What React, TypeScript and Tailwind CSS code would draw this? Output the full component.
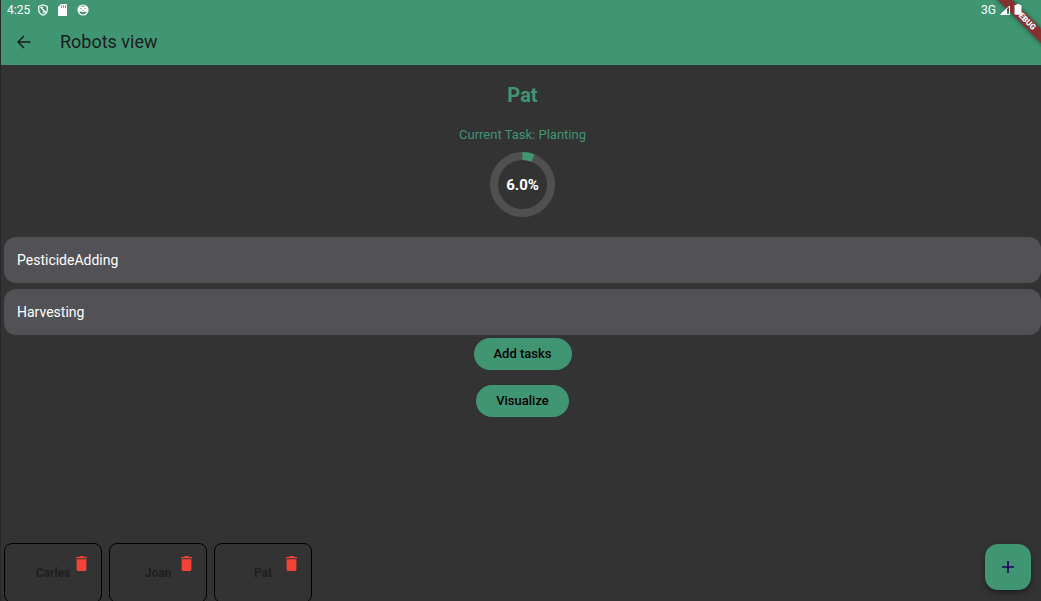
import React from "react";

const queuedTasks = ["PesticideAdding", "Harvesting"];
const robots = ["Carles", "Joan", "Pat"];

function StatusBar() {
  return (
    <div className="flex h-5 items-center justify-between pl-1.5 pr-[19px] text-white">
      <div className="flex items-center gap-2">
        <span className="text-xs leading-5">4:25</span>
        <svg className="h-3 w-2.5" viewBox="0 0 10 12" fill="none" stroke="currentColor" strokeWidth="1.2" aria-hidden="true">
          <path d="M5 .8 9.300 2.400V5.600C9.300 8.200 7.500 10.300 5 11.200 2.500 10.300 .7 8.200 .7 5.600V2.400Z" />
          <path d="M2.500 3.200 7.800 8.500M4.800 2.800 3.800 4.200M6.300 6.800 5 9" />
        </svg>
        <svg className="ml-0.5 h-3 w-[9px]" viewBox="0 0 9 12" fill="currentColor" aria-hidden="true">
          <path fillRule="evenodd" d="M3 0H8.200a.8 .8 0 0 1 .8 .8v10.400a.8 .8 0 0 1-.8 .8H.8a.8 .8 0 0 1-.8-.8V3ZM3 1.500v2.200h1v-2.200ZM5 1.500v2.200h1v-2.200ZM7 1.500v2.200h1v-2.200Z" />
        </svg>
        <svg className="ml-0.5 h-3 w-3" viewBox="0 0 12 12" aria-hidden="true">
          <circle cx="6" cy="6" r="5" fill="none" stroke="currentColor" strokeWidth="1.200" />
          <path d="M1 3.500 3 2.500 9 2.500 11 3.500V7L9.500 8 8 7.500 6 8.300 4 7.500 2.500 8 1 7Z" fill="currentColor" />
          <path d="M3.500 4.500h1M7.500 4.500h1M5.500 6.300h1" stroke="#409672" strokeWidth="1" />
        </svg>
      </div>
      <div className="relative z-20 flex items-center gap-1">
        <span className="text-xs leading-5">3G</span>
        <svg className="h-2.5 w-2.5" viewBox="0 0 10 10" aria-hidden="true">
          <path d="M1 9.500 9.500 1V9.500Z" fill="none" stroke="currentColor" />
          <path d="M0 10 7 3V10Z" fill="currentColor" />
        </svg>
        <svg className="h-3 w-2" viewBox="0 0 8 12" fill="currentColor" aria-hidden="true">
          <path d="M2.500 0h3v1H7.500v9.500H.5V1h2Z" />
        </svg>
      </div>
    </div>
  );
}

function ProgressRing({ percent }: { percent: number }) {
  const radius = 28.5;
  const length = 2 * Math.PI * radius;
  return (
    <div className="relative grid size-[65px] place-items-center">
      <svg className="absolute inset-0 -rotate-90" viewBox="0 0 65 65" fill="none" strokeWidth="8" aria-hidden="true">
        <circle cx="32.5" cy="32.5" r={radius} stroke="#505050" />
        <circle
          cx="32.5"
          cy="32.5"
          r={radius}
          stroke="#409672"
          strokeDasharray={`${(length * percent) / 100} ${length}`}
        />
      </svg>
      <span className="relative text-[15px] leading-5 font-bold text-white">{percent.toFixed(1)}%</span>
    </div>
  );
}

function RobotCard({ name }: { name: string }) {
  return (
    <li className="relative flex h-[60px] w-[98px] items-center justify-center rounded-lg border border-black">
      <span className="text-xs leading-4 font-bold text-[#1f1f21]">{name}</span>
      <button type="button" aria-label={`Delete ${name}`} className="absolute top-3 right-3.5 text-[#f44336]">
        <svg className="h-[15px] w-[11px]" viewBox="0 0 11 15" fill="currentColor" aria-hidden="true">
          <path d="M0 1h3l.8-1h3.400L8 1h3v1.300H0ZM.6 3.200h9.800v10.300a1.400 1.400 0 0 1-1.400 1.400H2A1.400 1.400 0 0 1 .6 13.500Z" />
        </svg>
      </button>
    </li>
  );
}

export default function App() {
  return (
    <div className="relative flex h-screen flex-col overflow-hidden border-l border-[#282829] bg-[#333333] font-['Roboto','Noto_Sans',sans-serif]">
      <header className="bg-[#409672] pb-px">
        <StatusBar />
        <div className="flex h-11 items-center gap-[29px] pl-4 text-[#1c1c1f]">
          <button type="button" aria-label="Back">
            <svg className="size-3.5" viewBox="0 0 14 14" fill="none" stroke="currentColor" strokeWidth="1.500" aria-hidden="true">
              <path d="M13.500 7H1.500M7 1 1 7 7 13" />
            </svg>
          </button>
          <h1 className="text-lg leading-6">Robots view</h1>
        </div>
      </header>

      <main className="flex min-h-0 flex-1 flex-col pl-[3px]">
        <section className="flex flex-col items-center pt-[18px]">
          <h2 className="text-xl leading-6 font-bold text-[#409672]">Pat</h2>
          <p className="mt-[18px] mb-[7px] text-[13px] leading-5 text-[#409672]">Current Task: Planting</p>
          <ProgressRing percent={6} />
        </section>

        <ul className="mt-5 flex flex-col gap-1.5">
          {queuedTasks.map((task) => (
            <li key={task} className="flex h-[46px] items-center rounded-xl bg-[#525155] px-[13px] text-sm leading-5 text-white">
              {task}
            </li>
          ))}
        </ul>

        <div className="mt-[3px] flex flex-col items-center gap-[15px] text-[13px] leading-4 font-medium text-black">
          <button type="button" className="rounded-full bg-[#409672] px-5 py-2">Add tasks</button>
          <button type="button" className="rounded-full bg-[#409672] px-5 py-2">Visualize</button>
        </div>
      </main>

      <footer className="flex h-[58px] items-start pl-[3px]">
        <ul className="flex gap-[7px]">
          {robots.map((name) => (
            <RobotCard key={name} name={name} />
          ))}
        </ul>
      </footer>

      <button
        type="button"
        aria-label="Add robot"
        className="absolute right-2.5 bottom-[11px] grid size-[46px] place-items-center rounded-[13px] bg-[#409672] text-[#21005d] shadow-[0_3px_6px_rgba(0,0,0,0.4)]"
      >
        <svg className="size-3" viewBox="0 0 12 12" fill="none" stroke="currentColor" strokeWidth="1.600" aria-hidden="true">
          <path d="M6 0v12M0 6h12" />
        </svg>
      </button>

      <div className="pointer-events-none absolute -top-3 -right-6 z-10 flex h-16 w-20 items-center justify-center">
        <span className="flex h-2.5 w-24 shrink-0 rotate-45 items-center justify-center bg-[#863030] text-[8px] leading-none font-black text-white shadow-[0_0_5px_rgba(0,0,0,0.5)]">
          DEBUG
        </span>
      </div>
    </div>
  );
}
